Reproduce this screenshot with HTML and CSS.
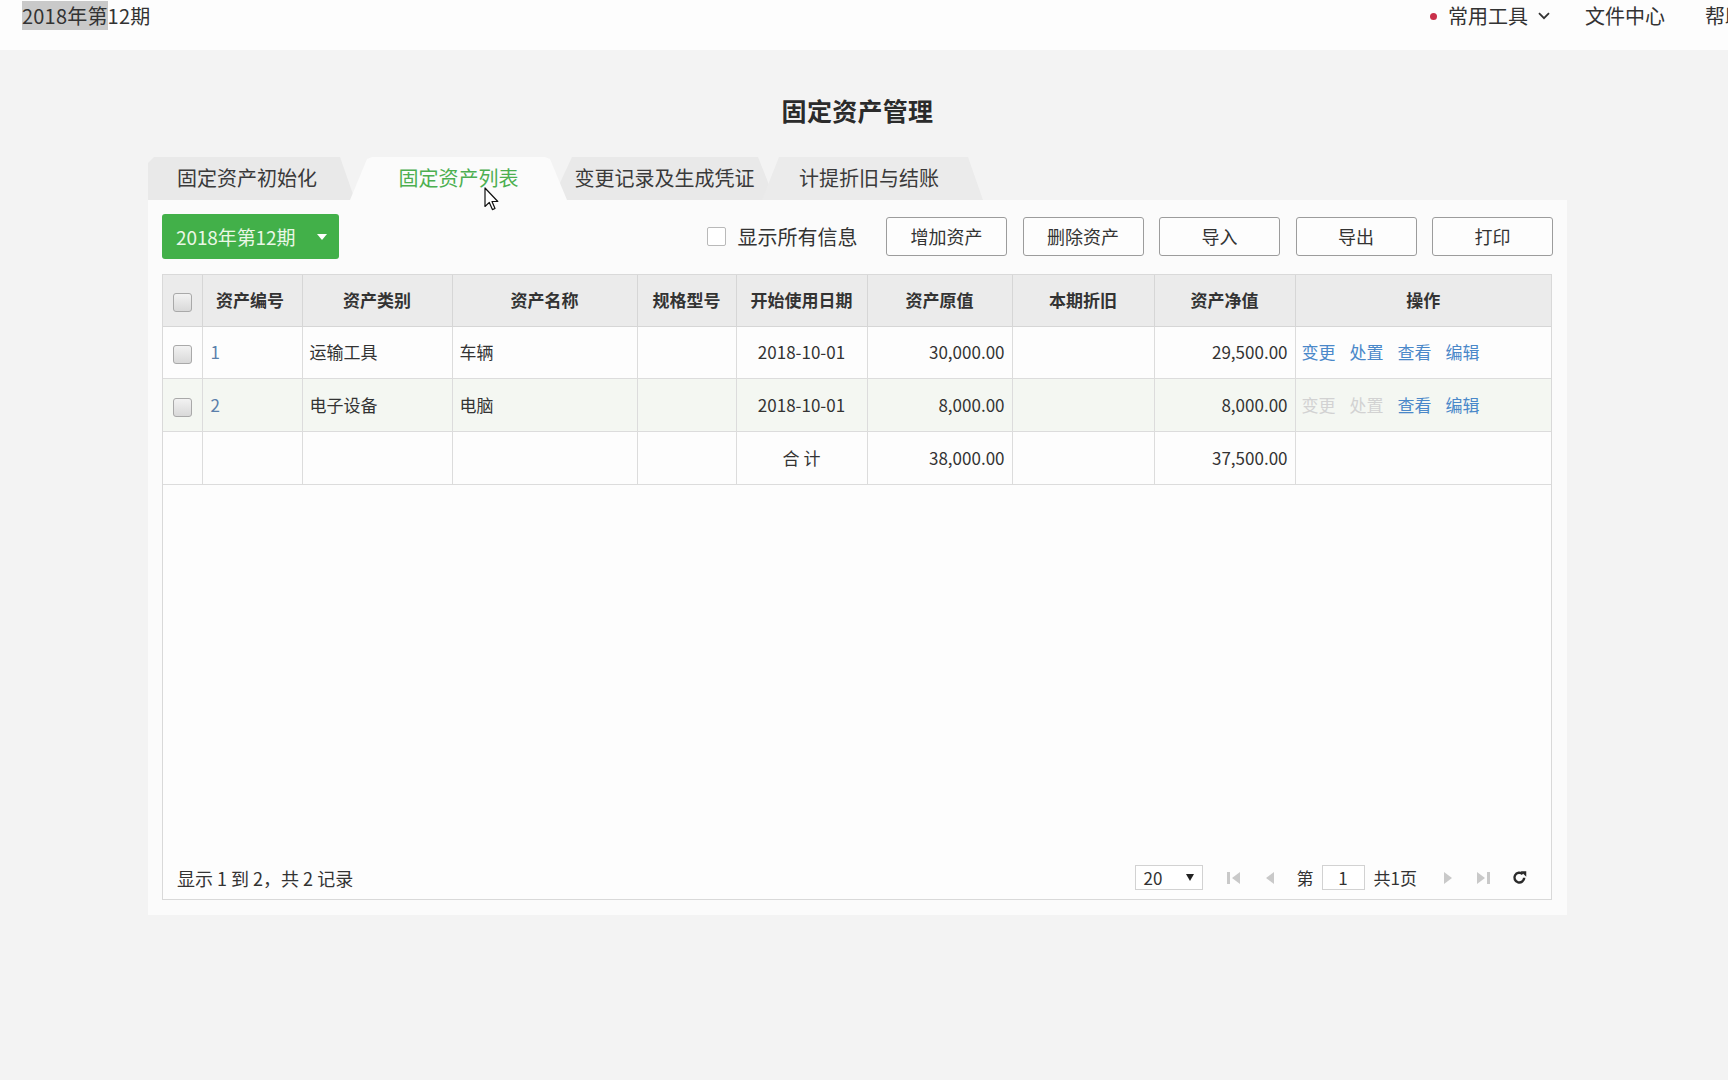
FILE: index.html
```html
<!DOCTYPE html>
<html lang="zh-CN">
<head>
<meta charset="utf-8">
<title>固定资产管理</title>
<link rel="stylesheet" href="styles.css">
</head>
<body>
<header class="topbar">
  <div class="period"><span class="sel">2018年第</span>12期</div>
  <nav class="topnav">
    <span class="tool"><i class="dot"></i>常用工具<svg class="chev" viewBox="0 0 12 8" width="12" height="8"><path d="M1 1.2 L6 6.2 L11 1.2" fill="none" stroke="#333" stroke-width="1.8"/></svg></span>
    <span class="nav-item">文件中心</span>
    <span class="nav-item">帮助中心</span>
  </nav>
</header>

<main class="page">
  <h1 class="title">固定资产管理</h1>

  <div class="tabs">
    <div class="tab tab-1">固定资产初始化</div>
    <div class="tab tab-3">变更记录及生成凭证</div>
    <div class="tab tab-4">计提折旧与结账</div>
    <div class="tab tab-2 active">固定资产列表</div>
  </div>

  <section class="panel">
    <div class="toolbar">
      <button class="period-btn">2018年第12期<svg class="caret" viewBox="0 0 10 6" width="10" height="6"><path d="M0 0 H10 L5 6 Z" fill="#fff"/></svg></button>
      <div class="actions">
        <label class="showall"><span class="box"></span>显示所有信息</label>
        <button class="btn">增加资产</button>
        <button class="btn">删除资产</button>
        <button class="btn">导入</button>
        <button class="btn">导出</button>
        <button class="btn">打印</button>
      </div>
    </div>

    <div class="grid">
      <table class="data">
        <colgroup>
          <col class="c-chk"><col class="c-no"><col class="c-cat"><col class="c-name"><col class="c-spec">
          <col class="c-date"><col class="c-orig"><col class="c-dep"><col class="c-net"><col class="c-ops">
        </colgroup>
        <thead>
          <tr>
            <th><span class="chk"></span></th>
            <th>资产编号</th>
            <th>资产类别</th>
            <th>资产名称</th>
            <th>规格型号</th>
            <th>开始使用日期</th>
            <th>资产原值</th>
            <th>本期折旧</th>
            <th>资产净值</th>
            <th class="last">操作</th>
          </tr>
        </thead>
        <tbody>
          <tr class="r1">
            <td class="center"><span class="chk"></span></td>
            <td><a class="num">1</a></td>
            <td>运输工具</td>
            <td>车辆</td>
            <td></td>
            <td class="center">2018-10-01</td>
            <td class="right">30,000.00</td>
            <td></td>
            <td class="right">29,500.00</td>
            <td class="ops last"><a>变更</a><a>处置</a><a>查看</a><a>编辑</a></td>
          </tr>
          <tr class="r2 hover">
            <td class="center"><span class="chk"></span></td>
            <td><a class="num">2</a></td>
            <td>电子设备</td>
            <td>电脑</td>
            <td></td>
            <td class="center">2018-10-01</td>
            <td class="right">8,000.00</td>
            <td></td>
            <td class="right">8,000.00</td>
            <td class="ops last"><a class="off">变更</a><a class="off">处置</a><a>查看</a><a>编辑</a></td>
          </tr>
          <tr class="r3">
            <td></td>
            <td></td>
            <td></td>
            <td></td>
            <td></td>
            <td class="center">合 计</td>
            <td class="right">38,000.00</td>
            <td></td>
            <td class="right">37,500.00</td>
            <td class="last"></td>
          </tr>
        </tbody>
      </table>

      <div class="pager">
        <div class="pager-info">显示 1 到 2，共 2 记录</div>
        <div class="pager-ctrl">
          <div class="pagesize"><span>20</span><svg viewBox="0 0 8 7" width="8" height="7"><path d="M0 0 H8 L4 7 Z" fill="#222"/></svg></div>
          <svg class="pg-first" viewBox="0 0 13 12" width="13" height="12"><rect x="0" y="0" width="3" height="12" fill="#c9c9c9"/><path d="M13 0 V12 L5 6 Z" fill="#c9c9c9"/></svg>
          <svg class="pg-prev" viewBox="0 0 8 12" width="8" height="12"><path d="M8 0 V12 L0 6 Z" fill="#c9c9c9"/></svg>
          <span class="pg-lbl">第</span>
          <span class="pg-input">1</span>
          <span class="pg-total">共1页</span>
          <svg class="pg-next" viewBox="0 0 8 12" width="8" height="12"><path d="M0 0 V12 L8 6 Z" fill="#c9c9c9"/></svg>
          <svg class="pg-last" viewBox="0 0 13 12" width="13" height="12"><path d="M0 0 V12 L8 6 Z" fill="#c9c9c9"/><rect x="10" y="0" width="3" height="12" fill="#c9c9c9"/></svg>
          <svg class="pg-refresh" viewBox="0 0 16 16" width="15" height="15"><path d="M13 8.2 A5.2 5.2 0 1 1 11.4 4.4" fill="none" stroke="#2a2a2a" stroke-width="2.6"/><path d="M9.2 1.2 L15.2 1.2 L15.2 7.2 Z" fill="#2a2a2a"/></svg>
        </div>
      </div>
    </div>
  </section>
</main>

<svg class="cursor" viewBox="0 0 16 25" width="16" height="25"><path d="M1 1 V19.5 L5.3 15.4 L8.4 22.6 L11 21.5 L8 14.5 L13.8 14.5 Z" fill="#fff" stroke="#111" stroke-width="1.2" stroke-linejoin="round"/></svg>
</body>
</html>
```

FILE: styles.css
```css
* {
  box-sizing: border-box;
}

html, body {
  margin: 0;
  padding: 0;
}

body {
  background: #f3f3f3;
  font-family: "Noto Sans CJK SC", "Microsoft YaHei", "Noto Sans", sans-serif;
  color: #333;
  width: 1728px;
  height: 1080px;
  overflow: hidden;
  position: relative;
}

/* ---------- top bar ---------- */
.topbar {
  height: 50px;
  background: #fdfdfd;
  display: flex;
  align-items: flex-start;
  padding: 3px 0 0 22px;
  overflow: hidden;
  font-size: 20px;
  line-height: 26px;
  color: #333;
}

.period {
  letter-spacing: 0.2px;
}

.sel {
  background: #c9c9c9;
}

.topnav {
  margin-left: auto;
  margin-right: -57px;
  display: flex;
  flex-shrink: 0;
  align-items: center;
  white-space: nowrap;
}

.tool {
  display: flex;
  align-items: center;
}

.dot {
  width: 7px;
  height: 7px;
  border-radius: 50%;
  background: #c9304a;
  margin-right: 11px;
}

.chev {
  margin-left: 10px;
}

.nav-item {
  margin-left: 35px;
}

.nav-item + .nav-item {
  margin-left: 40px;
}

/* ---------- page ---------- */
.page {
  margin-left: 148px;
  width: 1419px;
}

.title {
  margin: 43px 0 0;
  height: 34px;
  font-size: 25px;
  line-height: 34px;
  font-weight: 700;
  text-align: center;
  color: #2b2b2b;
  letter-spacing: 0.3px;
}

/* ---------- tabs ---------- */
.tabs {
  margin-top: 30px;
  height: 43px;
  display: flex;
  position: relative;
}

.tab {
  height: 43px;
  line-height: 42px;
  font-size: 20px;
  text-align: center;
  background: #e9e9e9;
  color: #3a3a3a;
  flex-shrink: 0;
}

.tab-1 {
  order: 1;
  width: 207px;
  padding-right: 9px;
  clip-path: polygon(0 6px, 6px 0, 192px 0, 207px 100%, 0 100%);
}

.tab-2 {
  order: 2;
  width: 217px;
  margin-left: -5px;
  clip-path: polygon(0 100%, 17px 2px, 22px 0, 195px 0, 200px 2px, 217px 100%);
  position: relative;
  z-index: 3;
}

.tab-3 {
  order: 3;
  width: 223px;
  margin-left: -15px;
  padding-left: 2px;
  clip-path: polygon(0 100%, 20px 0, 206px 0, 223px 100%);
  z-index: 1;
  position: relative;
}

.tab-4 {
  order: 4;
  width: 221px;
  margin-left: -13px;
  clip-path: polygon(0 100%, 17px 0, 206px 0, 221px 100%);
  position: relative;
  z-index: 2;
  background: #ebebeb;
  padding-right: 7px;
}

.tab.active {
  background: #fbfbfb;
  color: #4caf50;
}

/* ---------- panel ---------- */
.panel {
  background: #fbfbfb;
  padding: 14px 15px 15px 14px;
}

.toolbar {
  height: 45px;
  display: flex;
  align-items: center;
  justify-content: space-between;
}

.period-btn {
  width: 177px;
  height: 45px;
  background: #42b049;
  border: none;
  border-radius: 3px;
  color: #eaf7e6;
  font-family: inherit;
  font-size: 19px;
  display: flex;
  align-items: center;
  padding: 0 0 0 14px;
  letter-spacing: -0.1px;
}

.caret {
  margin-left: 22px;
}

.actions {
  display: flex;
  align-items: center;
  gap: 15.5px;
  margin-right: -1px;
}

.showall {
  display: flex;
  align-items: center;
  font-size: 20px;
  color: #333;
  margin-right: 13px;
}

.showall .box {
  width: 19px;
  height: 19px;
  border: 1px solid #b9b9b9;
  border-radius: 2px;
  background: #fff;
  margin-right: 12px;
}

.btn {
  width: 121px;
  height: 39px;
  background: #fdfdfd;
  border: 1px solid #9c9c9c;
  border-radius: 3px;
  font-family: inherit;
  font-size: 18px;
  color: #333;
  padding: 0 0 1px;
  line-height: 36px;
}

/* ---------- grid ---------- */
.grid {
  margin-top: 15px;
  height: 626px;
  border: 1px solid #d9d9d9;
  background: #fdfdfd;
  display: flex;
  flex-direction: column;
}

.data {
  width: 100%;
  table-layout: fixed;
  border-collapse: collapse;
  font-size: 17px;
}

.c-chk { width: 39px; }
.c-no { width: 100px; }
.c-cat { width: 150px; }
.c-name { width: 185px; }
.c-spec { width: 99px; }
.c-date { width: 131px; }
.c-orig { width: 145px; }
.c-dep { width: 142px; }
.c-net { width: 141px; }

.data th {
  height: 51px;
  background: #ebebeb;
  font-weight: 700;
  color: #333;
  text-align: center;
  border-right: 1px solid #d6d6d6;
  border-bottom: 1px solid #d6d6d6;
  padding: 0 0 2px;
  white-space: nowrap;
}

.data th:nth-child(2) {
  padding-right: 4px;
}

.data td {
  height: 52px;
  padding: 0 7px 1px;
  color: #333;
  border-right: 1px solid #dcdcdc;
  border-bottom: 1px solid #dcdcdc;
  white-space: nowrap;
  background: #fdfdfd;
}

.data tr.r2 td,
.data tr.r3 td {
  height: 53px;
}

.data tr.hover td {
  background: #f4f7f2;
}

.data .last {
  border-right: none;
}

.data .center {
  text-align: center;
}

.data .right {
  text-align: right;
}

.data td:first-child {
  padding: 0;
}

.chk {
  display: inline-block;
  vertical-align: middle;
  width: 19px;
  height: 19px;
  border: 1px solid #a9a9a9;
  border-radius: 3px;
  background: linear-gradient(#f2f2f2, #d9d9d9);
}

.num {
  color: #5b80ab;
  padding-left: 1px;
}

.data td.ops {
  padding-left: 6px;
}

.ops a {
  color: #4a88c9;
  margin-right: 14px;
}

.ops a.off {
  color: #d2d2d2;
}

/* ---------- pager ---------- */
.pager {
  margin-top: auto;
  height: 41px;
  display: flex;
  align-items: center;
  justify-content: space-between;
  padding: 0 24px 2px 14px;
  font-size: 18px;
  color: #333;
}

.pager-ctrl {
  display: flex;
  align-items: center;
  font-size: 17px;
}

.pagesize {
  width: 68px;
  height: 25px;
  border: 1px solid #d2d2d2;
  background: #fff;
  display: flex;
  align-items: center;
  justify-content: space-between;
  padding: 0 8px 0 8px;
  line-height: 23px;
}

.pg-first { margin-left: 24px; }
.pg-prev { margin-left: 26px; }
.pg-lbl { margin-left: 23px; }

.pg-input {
  margin-left: 8px;
  width: 43px;
  height: 25px;
  border: 1px solid #d2d2d2;
  background: #fff;
  text-align: center;
  line-height: 23px;
}

.pg-total { margin-left: 9px; }
.pg-next { margin-left: 27px; }
.pg-last { margin-left: 25px; }
.pg-refresh { margin-left: 22px; }

/* ---------- mouse cursor overlay ---------- */
.cursor {
  position: absolute;
  left: 484px;
  top: 187px;
  z-index: 10;
}
```
